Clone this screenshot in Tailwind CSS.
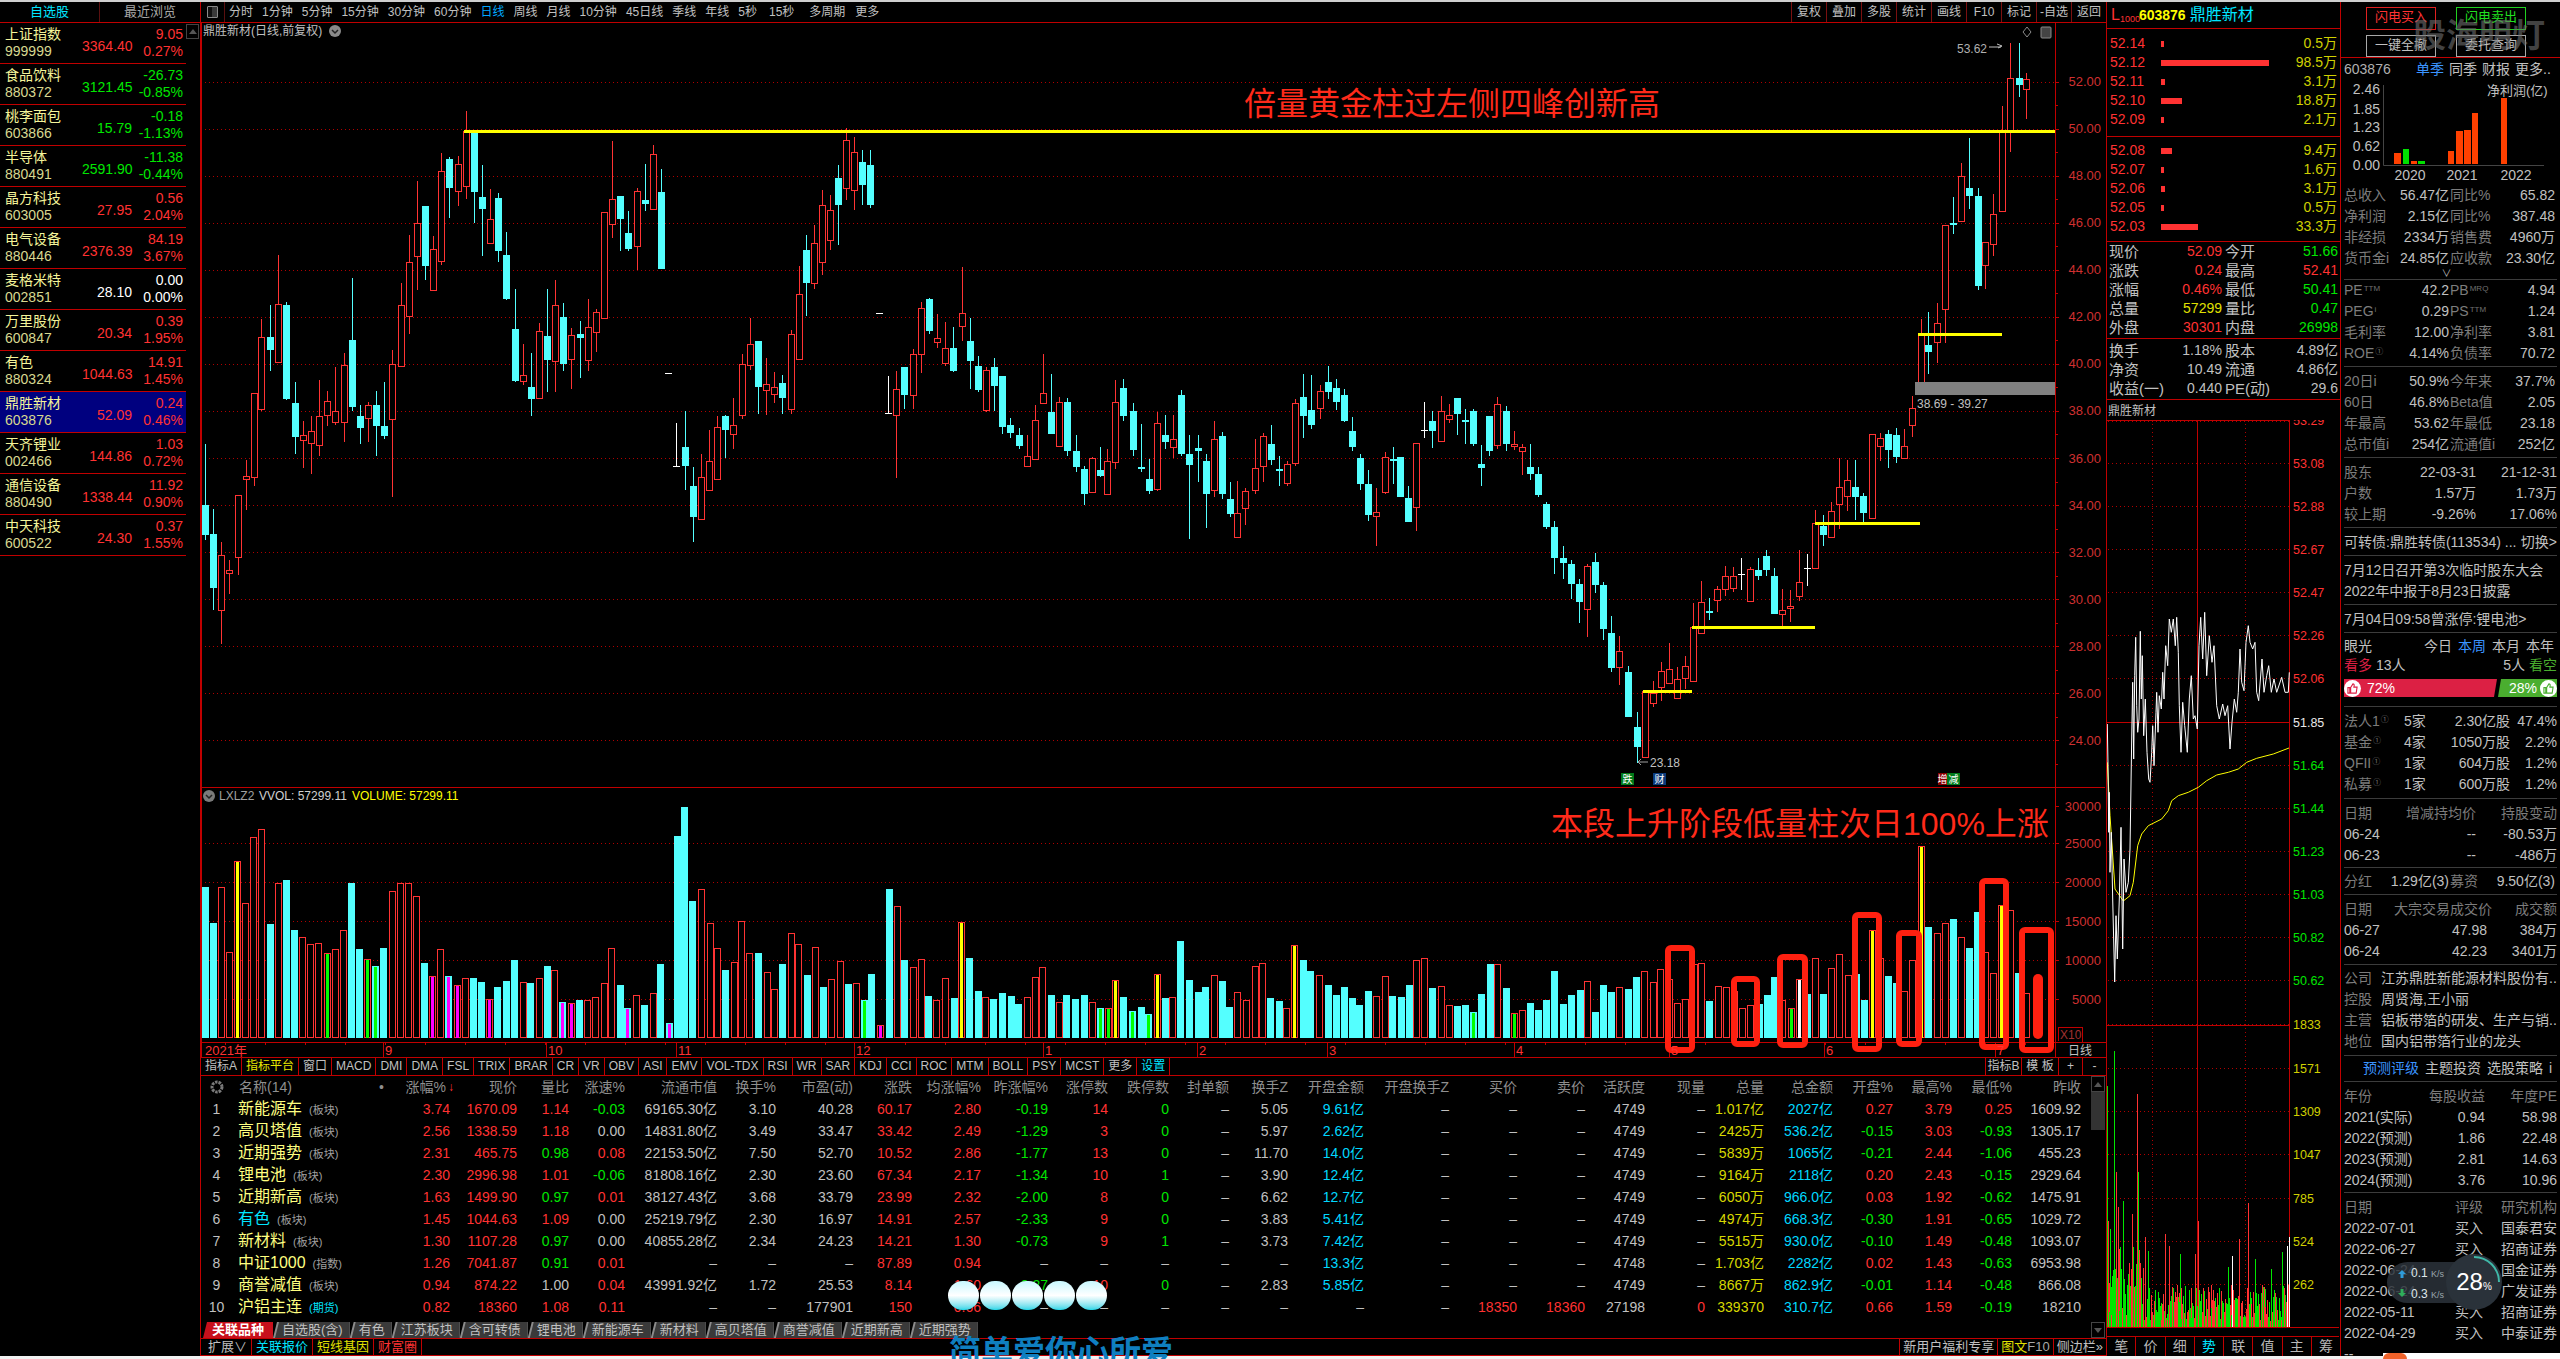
<!DOCTYPE html>
<html lang="zh-CN">
<head>
  <meta charset="UTF-8">
  <title>鼎胜新材 行情</title>
  <script src="https://cdn.jsdelivr.net/npm/@tailwindcss/browser@4"></script>
</head>
<body class="bg-black">
<div class="relative w-[2560px] h-[1359px] overflow-hidden bg-black text-[#c0c0c0] text-[14px] [font-family:'Liberation_Sans','Noto_Sans_CJK_SC',sans-serif]">
  <div class="h-[2px] bg-[#cfcfcf]"></div>

  <div class="flex h-[1354px]">
    <!-- watchlist -->
    <aside class="w-[201px] shrink-0 border-r border-[#c00000] flex flex-col">
      <div class="h-[21px] flex border-b border-[#c00000] text-[13px] leading-[20px] text-center">
        <div class="w-[100px] border-r border-[#5a1010] text-[#00e5ff]">自选股</div>
        <div class="w-[100px] text-[#a8a8a8]">最近浏览</div>
      </div>
      <div class="flex">
        <div id="watch" class="w-[186px]"></div>
        <div class="w-[14px] pt-[1px]">
          <div class="h-[15px] w-[13px] border border-[#444] flex items-center justify-center">
            <div class="w-0 h-0 border-x-[4px] border-x-transparent border-b-[5px] border-b-[#555]"></div>
          </div>
        </div>
      </div>
    </aside>

    <!-- chart column -->
    <main class="w-[1905px] shrink-0 flex flex-col">
      <div class="h-[21px] flex border-b border-[#c00000] text-[12px] leading-[20px]">
        <div class="w-[24px] border-r border-[#5a1010] flex items-center justify-center">
          <div class="w-[11px] h-[12px] border border-[#8a8a8a] rounded-[1px] bg-[#3a3a3a]"><div class="w-[4px] h-full bg-[#111]"></div></div>
        </div>
        <div class="flex gap-[9px] pl-[4px]">
          <span>分时</span><span>1分钟</span><span>5分钟</span><span>15分钟</span><span>30分钟</span><span>60分钟</span>
          <span class="text-[#00a8ff]">日线</span><span>周线</span><span>月线</span><span>10分钟</span><span>45日线</span><span>季线</span><span>年线</span><span>5秒</span><span class="ml-[3px]">15秒</span><span class="ml-[6px]">多周期</span><span class="ml-[1px]">更多</span>
        </div>
        <div class="ml-auto flex text-center">
          <span class="w-[35px] border-l border-[#7a1010]">复权</span>
          <span class="w-[35px] border-l border-[#7a1010]">叠加</span>
          <span class="w-[35px] border-l border-[#7a1010]">多股</span>
          <span class="w-[35px] border-l border-[#7a1010]">统计</span>
          <span class="w-[35px] border-l border-[#7a1010]">画线</span>
          <span class="w-[35px] border-l border-[#7a1010]">F10</span>
          <span class="w-[35px] border-l border-[#7a1010]">标记</span>
          <span class="w-[35px] border-l border-[#7a1010]">-自选</span>
          <span class="w-[35px] border-l border-[#7a1010]">返回</span>
        </div>
      </div>

      <svg id="kchart" class="block" width="1905" height="1035" viewBox="201 23 1905 1035"></svg>

      <div class="h-[18px] flex border-b border-[#c00000] text-[12px] leading-[16px]">
        <span class="px-[4px] border-r border-[#c00000]">指标A</span>
        <span class="px-[4px] border-r border-[#c00000] text-[#e8e800]">指标平台</span>
        <span class="px-[4px] border-r border-[#c00000]">窗口</span>
        <span class="px-[4px] border-r border-[#c00000]">MACD</span>
        <span class="px-[4px] border-r border-[#c00000]">DMI</span>
        <span class="px-[4px] border-r border-[#c00000]">DMA</span>
        <span class="px-[4px] border-r border-[#c00000]">FSL</span>
        <span class="px-[4px] border-r border-[#c00000]">TRIX</span>
        <span class="px-[4px] border-r border-[#c00000]">BRAR</span>
        <span class="px-[4px] border-r border-[#c00000]">CR</span>
        <span class="px-[4px] border-r border-[#c00000]">VR</span>
        <span class="px-[4px] border-r border-[#c00000]">OBV</span>
        <span class="px-[4px] border-r border-[#c00000]">ASI</span>
        <span class="px-[4px] border-r border-[#c00000]">EMV</span>
        <span class="px-[4px] border-r border-[#c00000]">VOL-TDX</span>
        <span class="px-[4px] border-r border-[#c00000]">RSI</span>
        <span class="px-[4px] border-r border-[#c00000]">WR</span>
        <span class="px-[4px] border-r border-[#c00000]">SAR</span>
        <span class="px-[4px] border-r border-[#c00000]">KDJ</span>
        <span class="px-[4px] border-r border-[#c00000]">CCI</span>
        <span class="px-[4px] border-r border-[#c00000]">ROC</span>
        <span class="px-[4px] border-r border-[#c00000]">MTM</span>
        <span class="px-[4px] border-r border-[#c00000]">BOLL</span>
        <span class="px-[4px] border-r border-[#c00000]">PSY</span>
        <span class="px-[4px] border-r border-[#c00000]">MCST</span>
        <span class="px-[4px] border-r border-[#c00000]">更多</span>
        <span class="px-[4px] border-r border-[#c00000] text-[#00e5ff]">设置</span>
        <div class="ml-auto flex text-center">
          <span class="w-[36px] border-l border-[#c00000]">指标B</span>
          <span class="w-[37px] border-l border-[#c00000]">模 板</span>
          <span class="w-[24px] border-l border-[#c00000]">+</span>
          <span class="w-[24px] border-l border-[#c00000]">-</span>
        </div>
      </div>

      <div class="flex">
        <div class="flex-1">
          <div id="table"></div>
          <div class="h-[20px] flex items-end pl-[2px] text-[13px] leading-[15px]">
            <div class="bg-[#c8101c] text-white font-bold px-[9px] pb-[1px] [clip-path:polygon(4px_0,100%_0,100%_100%,0_100%)]">关联品种</div>
            <span class="bg-[#8c8c8c] pl-[2px] [clip-path:polygon(4px_0,100%_0,100%_100%,0_100%)]"><span class="block bg-[#3a3a3a] text-[#c0c0c0] px-[7px] pb-[1px] [clip-path:polygon(4px_0,100%_0,100%_100%,0_100%)]">自选股(含)</span></span>
            <span class="bg-[#8c8c8c] pl-[2px] [clip-path:polygon(4px_0,100%_0,100%_100%,0_100%)]"><span class="block bg-[#3a3a3a] text-[#c0c0c0] px-[7px] pb-[1px] [clip-path:polygon(4px_0,100%_0,100%_100%,0_100%)]">有色</span></span>
            <span class="bg-[#8c8c8c] pl-[2px] [clip-path:polygon(4px_0,100%_0,100%_100%,0_100%)]"><span class="block bg-[#3a3a3a] text-[#c0c0c0] px-[7px] pb-[1px] [clip-path:polygon(4px_0,100%_0,100%_100%,0_100%)]">江苏板块</span></span>
            <span class="bg-[#8c8c8c] pl-[2px] [clip-path:polygon(4px_0,100%_0,100%_100%,0_100%)]"><span class="block bg-[#3a3a3a] text-[#c0c0c0] px-[7px] pb-[1px] [clip-path:polygon(4px_0,100%_0,100%_100%,0_100%)]">含可转债</span></span>
            <span class="bg-[#8c8c8c] pl-[2px] [clip-path:polygon(4px_0,100%_0,100%_100%,0_100%)]"><span class="block bg-[#3a3a3a] text-[#c0c0c0] px-[7px] pb-[1px] [clip-path:polygon(4px_0,100%_0,100%_100%,0_100%)]">锂电池</span></span>
            <span class="bg-[#8c8c8c] pl-[2px] [clip-path:polygon(4px_0,100%_0,100%_100%,0_100%)]"><span class="block bg-[#3a3a3a] text-[#c0c0c0] px-[7px] pb-[1px] [clip-path:polygon(4px_0,100%_0,100%_100%,0_100%)]">新能源车</span></span>
            <span class="bg-[#8c8c8c] pl-[2px] [clip-path:polygon(4px_0,100%_0,100%_100%,0_100%)]"><span class="block bg-[#3a3a3a] text-[#c0c0c0] px-[7px] pb-[1px] [clip-path:polygon(4px_0,100%_0,100%_100%,0_100%)]">新材料</span></span>
            <span class="bg-[#8c8c8c] pl-[2px] [clip-path:polygon(4px_0,100%_0,100%_100%,0_100%)]"><span class="block bg-[#3a3a3a] text-[#c0c0c0] px-[7px] pb-[1px] [clip-path:polygon(4px_0,100%_0,100%_100%,0_100%)]">高贝塔值</span></span>
            <span class="bg-[#8c8c8c] pl-[2px] [clip-path:polygon(4px_0,100%_0,100%_100%,0_100%)]"><span class="block bg-[#3a3a3a] text-[#c0c0c0] px-[7px] pb-[1px] [clip-path:polygon(4px_0,100%_0,100%_100%,0_100%)]">商誉减值</span></span>
            <span class="bg-[#8c8c8c] pl-[2px] [clip-path:polygon(4px_0,100%_0,100%_100%,0_100%)]"><span class="block bg-[#3a3a3a] text-[#c0c0c0] px-[7px] pb-[1px] [clip-path:polygon(4px_0,100%_0,100%_100%,0_100%)]">近期新高</span></span>
            <span class="bg-[#8c8c8c] pl-[2px] [clip-path:polygon(4px_0,100%_0,100%_100%,0_100%)]"><span class="block bg-[#3a3a3a] text-[#c0c0c0] px-[7px] pb-[1px] [clip-path:polygon(4px_0,100%_0,100%_100%,0_100%)]">近期强势</span></span>
          </div>
        </div>
        <div class="w-[14px] mr-[1px] h-[262px] flex flex-col">
          <div class="h-[16px] border border-[#444] flex items-center justify-center"><div class="w-0 h-0 border-x-[4px] border-x-transparent border-b-[5px] border-b-[#555]"></div></div>
          <div class="h-[38px] bg-[#333]"></div>
          <div class="flex-1"></div>
          <div class="h-[16px] border border-[#444] flex items-center justify-center"><div class="w-0 h-0 border-x-[4px] border-x-transparent border-t-[5px] border-t-[#555]"></div></div>
        </div>
      </div>

      <div class="h-[18px] flex border-y border-[#c00000] text-[13px] leading-[16px]">
        <span class="px-[4px] ml-[3px] border-r border-[#c00000]">扩展∨</span>
        <span class="px-[4px] border-r border-[#c00000] text-[#00e5ff]">关联报价</span>
        <span class="px-[4px] border-r border-[#c00000] text-[#e0e000]">短线基因</span>
        <span class="px-[4px] border-r border-[#c00000] text-[#ff3232]">财富圈</span>
        <div class="ml-auto flex">
          <span class="px-[3px] border-l border-[#c00000]">新用户福利专享</span>
          <span class="px-[3px] border-l border-[#c00000]"><span class="text-[#e0e000]">图文</span><span class="text-[#a8a8a8]">F10</span></span>
          <span class="px-[3px] border-l border-[#c00000]">侧边栏»</span>
        </div>
      </div>
    </main>

    <!-- order book + minute chart -->
    <section class="w-[235px] shrink-0 border-x border-[#c00000] flex flex-col">
      <div class="h-[27px] border-b border-[#c00000] flex items-center pl-[4px] whitespace-nowrap">
        <span class="text-[16px] text-[#ff3232]">L</span>
        <span class="text-[9px] text-[#ff3232] mt-[10px] mr-[3px] w-[16px]">1000</span>
        <span class="font-bold text-[#ffff00]">603876</span>
        <span class="text-[16px] text-[#00e5ff] ml-[4px]">鼎胜新材</span>
      </div>
      <div id="asks" class="pt-[5px]"></div>
      <div class="h-px bg-[#c00000] mt-[7px]"></div>
      <div id="bids" class="pt-[4px]"></div>
      <div class="h-px bg-[#c00000] mt-[5px]"></div>
      <div id="quote"></div>
      <div class="h-px bg-[#c00000] mt-px"></div>
      <div id="quote2" class="pt-[2px]"></div>
      <div class="h-px bg-[#c00000] mt-px"></div>
      <div class="h-[20px] text-[12px] leading-[22px] pl-[1px]">鼎胜新材</div>
      <svg id="minute" class="block" width="233" height="917" viewBox="2107 421 233 917"></svg>
      <div class="flex-1 flex text-center leading-[18px] text-[#b8b8b8]">
        <span class="flex-1 border-r border-[#c00000]">笔</span>
        <span class="flex-1 border-r border-[#c00000]">价</span>
        <span class="flex-1 border-r border-[#c00000]">细</span>
        <span class="flex-1 border-r border-[#c00000] text-[#00e5ff]">势</span>
        <span class="flex-1 border-r border-[#c00000]">联</span>
        <span class="flex-1 border-r border-[#c00000]">值</span>
        <span class="flex-1 border-r border-[#c00000]">主</span>
        <span class="flex-1">筹</span>
      </div>
    </section>

    <!-- fundamentals -->
    <aside class="w-[219px] shrink-0 flex flex-col overflow-hidden">
      <div class="h-[56px] shrink-0 border-b border-[#c00000] grid grid-cols-[70px_70px] gap-x-[20px] gap-y-[5px] pl-[25px] pt-[5px] text-[13px] leading-[18px] text-center">
        <div class="border border-[#e02020] text-[#ff3232]">闪电买入</div>
        <div class="border border-[#20d020] text-[#20e020]">闪电卖出</div>
        <div class="border border-[#a8a8a8]">一键全撤</div>
        <div class="border border-[#a8a8a8]">委托查询</div>
      </div>
      <div id="panel" class="px-[3px] shrink-0"></div>
    </aside>
  </div>

  <div class="h-[3px] bg-[#f2f2f2]"></div>

  <!-- things floating over the terminal -->
  <div class="absolute left-[2413px] top-[17px] text-[33px] leading-[38px] font-bold text-[#707070]/60 whitespace-nowrap">股海明灯</div>
  <div class="absolute left-[948px] top-[1281px] flex gap-[1.5px]">
    <div class="w-[30.6px] h-[29px] rounded-full bg-linear-to-b from-[#c8f8ff] via-white to-[#12d6e8]"></div>
    <div class="w-[30.6px] h-[29px] rounded-full bg-linear-to-b from-[#c8f8ff] via-white to-[#12d6e8]"></div>
    <div class="w-[30.6px] h-[29px] rounded-full bg-linear-to-b from-[#c8f8ff] via-white to-[#12d6e8]"></div>
    <div class="w-[30.6px] h-[29px] rounded-full bg-linear-to-b from-[#c8f8ff] via-white to-[#12d6e8]"></div>
    <div class="w-[30.6px] h-[29px] rounded-full bg-linear-to-b from-[#c8f8ff] via-white to-[#12d6e8]"></div>
  </div>
  <div class="absolute left-[949px] top-[1335px] text-[32px] leading-[34px] font-bold text-[#0f7fc0] whitespace-nowrap">简单爱你心所爱</div>

  <div class="absolute left-[2387px] top-[1262px] w-[90px] h-[41px] rounded-full bg-[#2b333b]/85">
    <div class="absolute left-[24px] top-[3px] text-[12px] leading-[16px] text-[#dfe6ea]">0.1 <span class="text-[9px] text-[#9aa5ad]">K/s</span></div>
    <div class="absolute left-[24px] top-[24px] text-[12px] leading-[16px] text-[#dfe6ea]">0.3 <span class="text-[9px] text-[#9aa5ad]">K/s</span></div>
    <svg class="absolute left-[9px] top-[5px]" width="12" height="32" viewBox="0 0 12 32">
      <path d="M6 3 2 7h2.5v4h3V7H10z" fill="#2f9bd8"/><path d="M6 30l4-4H7.500v-4h-3v4H2z" fill="#2fae5a"/>
    </svg>
  </div>
  <div class="absolute left-[2446px] top-[1254px] w-[56px] h-[56px] rounded-full bg-[#2a323a] flex items-center justify-center text-white">
    <svg class="absolute inset-0" width="56" height="56" viewBox="0 0 56 56"><path d="M28 3A25 25 0 0 1 53 28" fill="none" stroke="#3fb8a8" stroke-width="2"/></svg>
    <span class="text-[24px] leading-none">28</span><span class="text-[10px] mt-[8px]">%</span>
  </div>
  <div class="absolute left-[2383px] top-[1353px] w-[177px] h-[6px] bg-white">
    <div class="w-[24px] h-[6px] bg-[#f0622a] rounded-t-[6px]"></div>
  </div>
</div>

<script>
  const RED = '#ff3333', CYAN = '#54ffff', GRID = '#b00000', LINE = '#c00000';

  // watchlist
  const watch = [
    ['上证指数','999999','3364.40','9.05','0.27%','r'],['食品饮料','880372','3121.45','-26.73','-0.85%','g'],
    ['桃李面包','603866','15.79','-0.18','-1.13%','g'],['半导体','880491','2591.90','-11.38','-0.44%','g'],
    ['晶方科技','603005','27.95','0.56','2.04%','r'],['电气设备','880446','2376.39','84.19','3.67%','r'],
    ['麦格米特','002851','28.10','0.00','0.00%','w'],['万里股份','600847','20.34','0.39','1.95%','r'],
    ['有色','880324','1044.63','14.91','1.45%','r'],['鼎胜新材','603876','52.09','0.24','0.46%','r'],
    ['天齐锂业','002466','144.86','1.03','0.72%','r'],['通信设备','880490','1338.44','11.92','0.90%','r'],
    ['中天科技','600522','24.30','0.37','1.55%','r']
  ];
  const wColor = { r: 'text-[#ff3232]', g: 'text-[#00e600]', w: 'text-white' };
  document.getElementById('watch').innerHTML = watch.map((w, i) => `
    <div class="h-[41px] border-b border-[#c00000] grid grid-cols-[77px_50px_55px] pl-[5px] pt-[3px] ${i === 9 ? 'bg-[#00007f]' : ''} ${wColor[w[5]]}">
      <div class="leading-[17px] whitespace-nowrap"><div class="text-[#f4f49a]">${w[0]}</div><div class="text-[#d8d890]">${w[1]}</div></div>
      <div class="text-right leading-[34px] pt-[3px]">${w[2]}</div>
      <div class="text-right leading-[17px] pr-[4px]"><div>${w[3]}</div><div>${w[4]}</div></div>
    </div>`).join('');

  // related-instrument table
  const tblCols = 'grid grid-cols-[31px_153px_65px_67px_52px_56px_92px_59px_77px_59px_69px_67px_60px_61px_60px_59px_76px_85px_68px_68px_60px_60px_59px_69px_60px_59px_60px_69px] whitespace-nowrap';
  const heads = ['涨幅%','现价','量比','涨速%','流通市值','换手%','市盈(动)','涨跌','均涨幅%','昨涨幅%','涨停数','跌停数','封单额','换手Z','开盘金额','开盘换手Z','买价','卖价','活跃度','现量','总量','总金额','开盘%','最高%','最低%','昨收'];
  const rows = [
    ['新能源车','板块','3.74 1670.09 1.14 -0.03 69165.30亿 3.10 40.28 60.17 2.80 -0.19 14 0 – 5.05 9.61亿 – – – 4749 – 1.017亿 2027亿 0.27 3.79 0.25 1609.92'],
    ['高贝塔值','板块','2.56 1338.59 1.18 0.00 14831.80亿 3.49 33.47 33.42 2.49 -1.29 3 0 – 5.97 2.62亿 – – – 4749 – 2425万 536.2亿 -0.15 3.03 -0.93 1305.17'],
    ['近期强势','板块','2.31 465.75 0.98 0.08 22153.50亿 7.50 52.70 10.52 2.86 -1.77 13 0 – 11.70 14.0亿 – – – 4749 – 5839万 1065亿 -0.21 2.44 -1.06 455.23'],
    ['锂电池','板块','2.30 2996.98 1.01 -0.06 81808.16亿 2.30 23.60 67.34 2.17 -1.34 10 1 – 3.90 12.4亿 – – – 4749 – 9164万 2118亿 0.20 2.43 -0.15 2929.64'],
    ['近期新高','板块','1.63 1499.90 0.97 0.01 38127.43亿 3.68 33.79 23.99 2.32 -2.00 8 0 – 6.62 12.7亿 – – – 4749 – 6050万 966.0亿 0.03 1.92 -0.62 1475.91'],
    ['有色','板块','1.45 1044.63 1.09 0.00 25219.79亿 2.30 16.97 14.91 2.57 -2.33 9 0 – 3.83 5.41亿 – – – 4749 – 4974万 668.3亿 -0.30 1.91 -0.65 1029.72'],
    ['新材料','板块','1.30 1107.28 0.97 0.00 40855.28亿 2.34 24.23 14.21 1.30 -0.73 9 1 – 3.73 7.42亿 – – – 4749 – 5515万 930.0亿 -0.10 1.49 -0.48 1093.07'],
    ['中证1000','指数','1.26 7041.87 0.91 0.01 – – – 87.89 0.94 – – – – – 13.3亿 – – – 4748 – 1.703亿 2282亿 0.02 1.43 -0.63 6953.98'],
    ['商誉减值','板块','0.94 874.22 1.00 0.04 43991.92亿 1.72 25.53 8.14 1.60 -0.27 10 0 – 2.83 5.85亿 – – – 4749 – 8667万 862.9亿 -0.01 1.14 -0.48 866.08'],
    ['沪铝主连','期货','0.82 18360 1.08 0.11 – – 177901 150 0.66 – – – – – – – 18350 18360 27198 0 339370 310.7亿 0.66 1.59 -0.19 18210']
  ];
  function cellClass(col, v) {
    const n = parseFloat(v);
    if (v === '–') return 'text-[#c0c0c0]';
    if (col === 2) return n < 1 ? 'text-[#00e600]' : n > 1 ? 'text-[#ff3232]' : 'text-[#c0c0c0]';
    if (col === 3 || col === 22 || col === 23 || col === 24) return n < 0 ? 'text-[#00e600]' : n > 0 ? 'text-[#ff3232]' : 'text-[#c0c0c0]';
    if ([0, 1, 7, 8, 10, 16, 17, 19].includes(col)) return 'text-[#ff3232]';
    if (col === 9 || col === 11) return 'text-[#00e600]';
    if (col === 14 || col === 21) return 'text-[#00d8ff]';
    if (col === 20) return 'text-[#d8d800]';
    return 'text-[#c0c0c0]';
  }
  const arrow = '<span class="text-[#ff3232] absolute -right-[4px] top-0 text-[12px]">↓</span>';
  let tbl = `<div class="${tblCols} h-[22px] leading-[22px] text-[#8f8f8f]">
    <div class="flex items-center justify-center"><svg width="14" height="14" viewBox="0 0 14 14"><circle cx="7" cy="7" r="5" fill="none" stroke="#7a7a7a" stroke-width="3" stroke-dasharray="2.500 1"/></svg></div>
    <div class="pl-[7px] flex justify-between pr-[1px]"><span>名称(14)</span><span>•</span></div>
    ${heads.map((h, i) => `<div class="text-right relative ${i === 0 ? 'pr-[4px]' : ''}">${h}${i === 0 ? arrow : ''}</div>`).join('')}
  </div>`;
  rows.forEach((r, i) => {
    const vals = r[2].split(' ');
    const nameCls = r[0] === '有色' ? 'text-[#00e5ff]' : 'text-[#ffff80]';
    const tagCls = r[1] === '期货' ? 'text-[#00e5ff]' : 'text-[#a0a0a0]';
    tbl += `<div class="${tblCols} h-[22px] leading-[22px]">
      <div class="text-center">${i + 1}</div>
      <div class="pl-[6px]"><span class="text-[16px] ${nameCls}">${r[0]}</span><span class="text-[11px] ml-[7px] ${tagCls}">(${r[1]})</span></div>
      ${vals.map((v, c) => `<div class="text-right ${cellClass(c, v)}">${v}</div>`).join('')}
    </div>`;
  });
  document.getElementById('table').innerHTML = tbl;

  // order book
  const askData = [['52.14','0.5万',3],['52.12','98.5万',108],['52.11','3.1万',4],['52.10','18.8万',21],['52.09','2.1万',3]];
  const bidData = [['52.08','9.4万',11],['52.07','1.6万',3],['52.06','3.1万',4],['52.05','0.5万',3],['52.03','33.3万',37]];
  const bookRow = d => `<div class="h-[19px] leading-[19px] flex items-center pl-[3px] pr-[3px]">
      <span class="w-[51px] text-[#ff3232]">${d[0]}</span>
      <span class="h-[6px] bg-[#ff3232]" style="width:${d[2]}px"></span>
      <span class="ml-auto text-[#d0d000]">${d[1]}</span></div>`;
  document.getElementById('asks').innerHTML = askData.map(bookRow).join('');
  document.getElementById('bids').innerHTML = bidData.map(bookRow).join('');

  const qClass = { r: 'text-[#ff3232]', g: 'text-[#00e600]', y: 'text-[#e0e000]', n: 'text-[#c0c0c0]' };
  const quoteRow = q => `<div class="h-[19px] leading-[19px] flex pl-[2px] whitespace-nowrap">
      <div class="w-[113px] flex justify-between mr-[3px]"><span class="text-[15px]">${q[0]}</span><span class="${qClass[q[2]]}">${q[1]}</span></div>
      <div class="w-[113px] flex justify-between"><span class="text-[15px]">${q[3]}</span><span class="${qClass[q[5]]}">${q[4]}</span></div></div>`;
  document.getElementById('quote').innerHTML = [
    ['现价','52.09','r','今开','51.66','g'],['涨跌','0.24','r','最高','52.41','r'],['涨幅','0.46%','r','最低','50.41','g'],
    ['总量','57299','y','量比','0.47','g'],['外盘','30301','r','内盘','26998','g']].map(quoteRow).join('');
  document.getElementById('quote2').innerHTML = [
    ['换手','1.18%','n','股本','4.89亿','n'],['净资','10.49','n','流通','4.86亿','n'],['收益(一)','0.440','n','PE(动)','29.6','n']].map(quoteRow).join('');

  // fundamentals panel
  const sep = '<div class="h-px bg-[#3c3c3c] mt-[2px] mb-[4px]"></div>';
  const dim = 'text-[#7c7c7c]';
  const sup = t => `<sup class="text-[8px] text-[#707070] ml-[1px]">${t}</sup>`;
  const halves = (a, b, c, d) => `<div class="h-[21px] leading-[21px] flex whitespace-nowrap">
      <div class="w-[105px] flex justify-between mr-[1px]"><span class="${dim}">${a}</span><span>${b}</span></div>
      <div class="w-[105px] flex justify-between"><span class="${dim}">${c}</span><span>${d}</span></div></div>`;
  const g3 = (a, b, c, cols, lab) => `<div class="h-[21px] leading-[21px] grid ${cols} whitespace-nowrap"><span class="${lab ? dim : ''}">${a}</span><span class="text-right ${lab ? dim : ''}">${b}</span><span class="text-right ${lab ? dim : ''}">${c}</span></div>`;
  const desc = (a, b) => `<div class="h-[21px] leading-[21px] flex whitespace-nowrap"><span class="w-[37px] ${dim}">${a}</span><span>${b}</span></div>`;
  const inst = (a, b, c, d) => `<div class="h-[21px] leading-[21px] grid grid-cols-[60px_36px_70px_47px] whitespace-nowrap"><span class="${dim}">${a}${sup('①')}</span><span>${b}</span><span class="text-right">${c}</span><span class="text-right">${d}</span></div>`;
  const rate = (a, b, c) => `<div class="h-[21px] leading-[21px] grid grid-cols-[111px_46px_56px] whitespace-nowrap"><span>${a}</span><span>${b}</span><span class="text-right">${c}</span></div>`;
  const thumb = c => `<span class="w-[17px] h-[17px] rounded-full bg-white flex items-center justify-center shrink-0"><svg width="11" height="11" viewBox="0 0 12 12"><path d="M1 5h2v6H1zM4 5l2.500-4c1 0 1.500.8 1.300 1.800L7.500 4.500H11l-1 6.500H4z" fill="none" stroke="${c}" stroke-width="1.200"/></svg></span>`;
  const cols3a = 'grid-cols-[50px_82px_81px]', cols3b = 'grid-cols-[50px_93px_70px]', cols3c = 'grid-cols-[60px_81px_72px]';
  document.getElementById('panel').innerHTML = `
    <div class="h-[23px] leading-[22px] flex whitespace-nowrap"><span class="w-[72px] text-[#b0b0b0]">603876</span><span class="text-[#3b94ff] mr-[5px]">单季</span><span class="mr-[5px]">同季</span><span class="mr-[5px]">财报</span><span>更多..</span></div>
    <svg class="block -mx-[3px]" width="219" height="104" viewBox="2341 81 219 104">
      <g font-size="14" fill="#c0c0c0" text-anchor="end">
        <text x="2380" y="94">2.46</text><text x="2380" y="114">1.85</text><text x="2380" y="132">1.23</text><text x="2380" y="151">0.62</text><text x="2380" y="170">0.00</text>
      </g>
      <text x="2487" y="95" font-size="13" fill="#c0c0c0">净利润(亿)</text>
      <path d="M2383.500 85V165.500H2544" fill="none" stroke="#444"/>
      <g fill="#ff4000"><rect x="2394" y="153" width="7" height="11"/><rect x="2411" y="161" width="6" height="3"/><rect x="2448" y="151" width="6" height="13"/><rect x="2456" y="131" width="7" height="33"/><rect x="2464" y="130" width="7" height="34"/><rect x="2472" y="113" width="6" height="51"/><rect x="2501" y="98" width="6" height="66"/></g>
      <g fill="#00e000"><rect x="2403" y="149" width="6" height="15"/><rect x="2418" y="161" width="7" height="3"/></g>
      <g font-size="14" fill="#c0c0c0" text-anchor="middle"><text x="2410" y="180">2020</text><text x="2462" y="180">2021</text><text x="2516" y="180">2022</text></g>
    </svg>
    ${halves('总收入','56.47亿','同比%','65.82')}${halves('净利润','2.15亿','同比%','387.48')}${halves('非经损','2334万','销售费','4960万')}${halves('货币金i','24.85亿','应收款','23.30亿')}
    <div class="h-[10px] text-center text-[10px] leading-[10px] pr-[8px] text-[#b0b0b0]">∨</div>
    <div class="h-px bg-[#3c3c3c]"></div>
    ${halves('PE'+sup('TTM'),'42.2','PB'+sup('MRQ'),'4.94')}${halves('PEG'+sup('i'),'0.29','PS'+sup('TTM'),'1.24')}${halves('毛利率','12.00','净利率','3.81')}${halves('ROE'+sup('①'),'4.14%','负债率','70.72')}
    ${sep}
    ${halves('20日i','50.9%','今年来','37.7%')}${halves('60日','46.8%','Beta值','2.05')}${halves('年最高','53.62','年最低','23.18')}${halves('总市值i','254亿','流通值i','252亿')}
    ${sep}
    ${g3('<span class="text-[#7c7c7c]">股东</span>','22-03-31','21-12-31',cols3a)}${g3('<span class="text-[#7c7c7c]">户数</span>','1.57万','1.73万',cols3a)}${g3('<span class="text-[#7c7c7c]">较上期</span>','-9.26%','17.06%',cols3a)}
    ${sep}
    <div class="h-[21px] leading-[21px] flex justify-between whitespace-nowrap"><span>可转债:鼎胜转债(113534) ...</span><span>切换&gt;</span></div>
    ${sep}
    <div class="h-[21px] leading-[21px] whitespace-nowrap">7月12日召开第3次临时股东大会</div>
    <div class="h-[21px] leading-[21px] whitespace-nowrap">2022年中报于8月23日披露</div>
    ${sep}
    <div class="h-[21px] leading-[21px] whitespace-nowrap">7月04日09:58曾涨停:锂电池&gt;</div>
    <div class="h-px bg-[#3c3c3c] mt-[2px] mb-[3px]"></div>
    <div class="h-[21px] leading-[21px] flex whitespace-nowrap"><span class="w-[80px]">眼光</span><span class="mr-[6px]">今日</span><span class="mr-[6px] text-[#3b94ff]">本周</span><span class="mr-[6px]">本月</span><span>本年</span></div>
    <div class="h-[16px] leading-[16px] flex justify-between whitespace-nowrap"><span><span class="text-[#dc2044]">看多</span> 13人</span><span>5人 <span class="text-[#4aae2f]">看空</span></span></div>
    <div class="h-[18px] mt-[6px] mb-[9px] flex gap-[1px]">
      <div class="w-[153px] h-full bg-[#dc2044] flex items-center gap-[6px] text-white [clip-path:polygon(0_0,100%_0,calc(100%_-_3px)_100%,0_100%)]">${thumb('#dc2044')}<span>72%</span></div>
      <div class="flex-1 h-full bg-[#4aae2f] flex items-center justify-end gap-[3px] text-white [clip-path:polygon(3px_0,100%_0,100%_100%,0_100%)]"><span>28%</span>${thumb('#4aae2f')}</div>
    </div>
    <div class="h-px bg-[#3c3c3c] mb-[4px]"></div>
    ${inst('法人1','5家','2.30亿股','47.4%')}${inst('基金','4家','1050万股','2.2%')}${inst('QFII','1家','604万股','1.2%')}${inst('私募','1家','600万股','1.2%')}
    <div class="h-px bg-[#3c3c3c] mt-[3px] mb-[4px]"></div>
    ${g3('日期','增减持均价','持股变动',cols3a,true)}${g3('06-24','--','-80.53万',cols3a)}${g3('06-23','--','-486万',cols3a)}
    <div class="h-px bg-[#3c3c3c] mt-[1px] mb-[3px]"></div>
    ${halves('分红','1.29亿(3)','募资','9.50亿(3)')}
    ${sep}
    ${g3('日期','大宗交易成交价','成交额',cols3b,true)}${g3('06-27','47.98','384万',cols3b)}${g3('06-24','42.23','3401万',cols3b)}
    <div class="h-px bg-[#3c3c3c] mt-[2px] mb-[3px]"></div>
    ${desc('公司','江苏鼎胜新能源材料股份有..')}${desc('控股','周贤海,王小丽')}${desc('主营','铝板带箔的研发、生产与销..')}${desc('地位','国内铝带箔行业的龙头')}
    <div class="h-px bg-[#3c3c3c] mt-[3px] mb-[2px]"></div>
    <div class="h-[21px] leading-[21px] flex whitespace-nowrap pl-[19px]"><span class="text-[#3b94ff] mr-[6px]">预测评级</span><span class="mr-[6px]">主题投资</span><span class="mr-[6px]">选股策略</span><span>i</span></div>
    ${sep}
    ${g3('年份','每股收益','年度PE',cols3c,true)}${g3('2021(实际)','0.94','58.98',cols3c)}${g3('2022(预测)','1.86','22.48',cols3c)}${g3('2023(预测)','2.81','14.63',cols3c)}${g3('2024(预测)','3.76','10.96',cols3c)}
    <div class="h-px bg-[#3c3c3c] mt-[1px] mb-[4px]"></div>
    <div class="h-[21px] leading-[21px] grid grid-cols-[111px_46px_56px] whitespace-nowrap ${dim}"><span>日期</span><span>评级</span><span class="text-right">研究机构</span></div>
    ${rate('2022-07-01','买入','国泰君安')}${rate('2022-06-27','买入','招商证券')}${rate('2022-06-24','买入','国金证券')}${rate('2022-06-24','买入','广发证券')}${rate('2022-05-11','买入','招商证券')}${rate('2022-04-29','买入','中泰证券')}
    <div class="h-[21px] leading-[21px]">--</div>`;

  // ---- daily candles: [x, bodyTop, bodyBottom, wickTop, wickBottom] in crop coordinates ----
  const candles = [];
  function addCandles(ox, oy, sx, sy, list) {
    list.forEach(c => candles.push({ t: c[0], x: ox + c[1] / sx, a: oy + c[2] / sy, b: oy + c[3] / sy, h: oy + c[4] / sy, l: oy + c[5] / sy }));
  }
  addCandles(200, 120, 2.613, 3, [
    ['c',14,1155,1245,972,1260],['c',35,1242,1404,1167,1470],['r',56,1305,1470,1266,1572],['r',77,1350,1358,1320,1422],['r',98,1126,1312,1126,1366],
    ['r',119,1068,1076,1020,1170],['r',140,820,1070,820,1097],['r',160,652,866,597,873],['c',184,651,690,555,753],['r',205,553,725,405,725],
    ['c',226,555,837,546,840],['c',247,849,951,786,1002],['r',268,946,959,903,1044],['r',289,934,968,888,1062],['r',310,889,974,780,1008],
    ['r',333,844,884,813,918],['r',354,874,905,741,915],['r',375,736,905,699,966],['c',396,660,861,474,873],['c',417,888,924,855,972],
    ['r',438,856,893,846,966],['c',459,855,918,813,1008],['c',480,918,948,786,957],['r',503,733,896,690,1131],['r',524,556,737,489,737],
    ['r',545,427,587,345,642],['r',566,310,407,183,510],['c',587,258,438,258,480],['r',608,388,509,348,509],['r',629,154,422,99,435],
    ['c',650,118,204,111,294],['r',673,133,212,108,258],['r',694,34,197,-27,237],['c',715,36,216,36,309],['c',736,231,267,135,408],
    ['r',757,298,368,207,368],['c',778,234,393,219,426],['c',799,405,537,336,540],['c',822,627,783,507,786],['r',843,766,782,672,795],
    ['c',864,801,837,699,888],['r',885,634,833,609,833],['c',906,648,720,507,816],['r',927,556,722,480,816],['c',948,591,732,549,753],
    ['r',969,646,716,624,807],['c',992,642,654,603,774],['r',1013,622,719,537,753],['r',1034,577,635,567,696],['r',1055,277,593,277,593],
    ['r',1076,238,311,63,354],['c',1097,228,297,228,393],['c',1118,339,387,273,393],['r',1141,214,377,205,450],['c',1162,240,252,132,273],
    ['r',1183,103,266,75,266],['c',1204,216,447,147,447],['w',1223,760,761,760,761],['w',1245,1039,1040,909,1040],['c',1266,981,1038,873,1110],
    ['c',1287,1098,1191,1041,1266],['r',1310,1072,1196,1002,1196],['r',1331,1024,1109,930,1109],['r',1352,922,1076,888,1076],['c',1373,888,930,885,1014],
    ['r',1394,916,941,834,987],['r',1415,733,884,702,897],['r',1436,673,734,594,750],['c',1457,663,801,663,882],['r',1480,793,809,714,885],
    ['r',1501,802,821,756,849],['c',1522,789,834,765,882],['r',1543,643,866,630,882],['r',1564,523,716,438,716]
  ]);
  // the stretch around x=806..870 above y=280
  addCandles(0, 0, 1, 1, [
    ['c',806,250,283,235,316],['r',814,243,283,225,289],['r',822,205,262,190,275],['r',830,210,240,195,250],['c',838,178,205,165,245],
    ['r',846,140,188,128,200],['r',854,152,190,137,210],['c',862,162,185,150,205],['c',870,165,205,150,208]
  ]);
  addCandles(800, 280, 2.613, 3, [
    ['w',206,99,100,99,100],['w',231,399,400,288,400],['r',252,328,404,273,594],['c',273,261,345,261,387],['r',294,222,344,207,387],['r',315,85,221,66,279],
    ['c',336,57,153,54,162],['r',357,175,185,102,204],['r',380,205,248,126,258],['c',401,204,273,141,276],['r',422,100,137,-40,183],
    ['c',443,183,243,114,327],['c',464,258,330,228,336],['r',485,270,391,261,396],['c',506,261,318,234,393],['c',527,288,441,288,462],
    ['c',550,435,459,414,474],['c',571,465,498,444,507],['r',592,529,557,465,557],['r',613,421,536,375,536],['r',634,340,368,222,368],
    ['c',655,396,462,282,462],['r',676,367,497,351,497],['c',697,366,513,354,528],['c',720,513,561,465,576],['c',741,567,642,558,675],
    ['r',762,535,635,531,635],['c',783,570,588,501,591],['r',803,544,641,507,641],['r',824,367,545,300,567],['c',845,324,408,297,423],
    ['c',869,393,510,369,528],['c',890,561,567,432,576],['c',911,597,633,537,642],['r',932,430,627,396,633],['c',953,465,486,405,507],
    ['r',974,478,502,405,534],['c',995,345,522,330,528],['c',1016,522,555,465,777],['c',1039,504,513,465,606],['c',1060,543,642,522,744],
    ['r',1081,478,629,423,651],['c',1102,468,642,456,657],['c',1123,657,702,606,711],['r',1143,700,770,603,770],['r',1164,634,684,624,735],
    ['r',1188,565,629,477,642],['r',1209,469,557,459,606],['c',1230,492,540,435,555],['c',1251,567,573,528,618],['r',1272,553,608,543,618],
    ['r',1293,370,548,357,558],['c',1314,351,408,282,474],['c',1335,390,435,285,447],['r',1358,334,383,315,417],['c',1379,306,336,258,357],
    ['c',1400,324,366,297,390],['c',1421,345,423,327,426],['c',1442,453,501,411,513],['c',1463,534,612,522,630],['c',1484,612,705,570,723],
    ['r',1505,697,707,624,798],['r',1528,532,635,516,642],['c',1549,537,543,501,612],['c',1568,531,651,531,651]
  ]);
  addCandles(1400, 340, 2.376, 3, [
    ['c',20,474,546,438,546],['r',39,310,500,310,573],['w',58,270,272,186,294],['c',77,243,273,213,324],['r',98,214,302,168,302],
    ['r',117,226,236,192,249],['c',136,174,222,174,285],['c',155,240,243,207,312],['c',174,213,312,207,318],['c',193,372,384,315,438],
    ['c',212,228,333,228,348],['r',231,193,314,171,327],['c',253,213,312,198,333],['r',270,313,315,273,330],['r',291,322,332,312,405],
    ['c',310,381,402,312,420],['c',329,402,465,381,471],['c',348,492,561,486,567],['c',367,561,654,543,702],['c',388,654,669,618,717],
    ['c',407,672,732,660,777],['c',426,732,786,717,849],['r',445,678,806,672,891],['c',464,666,735,639,759],['c',483,735,867,726,900],
    ['c',502,879,984,828,996],['r',521,934,980,888,1035],['c',542,996,1131,978,1131],['c',562,1161,1221,1116,1270],['r',581,1054,1250,1054,1250],
    ['r',600,1060,1088,1023,1100],['r',619,994,1040,966,1083],['r',638,988,1028,909,1028],['r',657,1018,1073,981,1073],['r',676,979,1013,948,1047],
    ['r',697,862,1022,790,1026],['r',716,787,878,723,878],['c',735,813,815,774,840],['r',754,748,779,738,816],['r',773,709,746,678,768],
    ['r',792,709,743,681,756],['w',811,703,705,654,750],['r',832,688,782,681,782],['c',851,690,708,654,720],['c',870,648,690,630,708],
    ['c',889,708,822,684,822],['r',908,811,821,747,858],['r',927,798,800,750,846],['r',947,727,767,630,782],['w',966,684,686,642,738],
    ['r',987,550,683,510,683],['c',1006,558,585,525,618],['r',1025,514,590,486,590],['r',1044,441,491,354,567],['r',1063,421,467,360,513],
    ['c',1082,441,471,360,540],['c',1101,468,519,459,546],['r',1122,283,533,283,533],['r',1141,295,317,279,363],['c',1160,282,330,270,384],
    ['c',1179,285,351,264,369],['r',1198,319,353,267,353],['r',1217,205,254,168,291]
  ]);
  addCandles(1700, 0, 1.823, 3, [
    ['r',402,1003,1145,957,1145],['c',416,1035,1056,936,1122],['r',432,970,1025,909,1088],['r',447,676,926,676,1028],['c',462,669,673,591,701],
    ['r',476,528,662,490,662],['c',491,564,588,414,627],['c',506,588,858,564,870],['r',520,727,796,727,868],['r',535,643,733,582,768],
    ['r',551,390,634,318,634],['r',566,234,395,130,455],['c',581,234,254,130,290],['r',595,238,268,219,357]
  ]);

  // ---- volume bars: [x, top, kind] in crop coordinates ----
  const vols = [];
  function addVols(ox, oy, sx, sy, str) {
    str.trim().split(/\s+/).forEach(s => { const p = s.split(','); vols.push({ t: p[0], x: ox + (+p[1]) / sx, y: oy + (+p[2]) / sy }); });
  }
  addVols(0, 400, 3, 2.376, `c,616,1157 c,640,1243 r,664,1156 r,688,1312 y,712,1096 r,736,1194 r,760,1039 r,784,1020 c,811,1245 r,835,1148 c,859,1140 c,883,1259 r,907,1277 r,931,1293 r,955,1289 g,982,1315 r,1006,1305 r,1030,1260 c,1054,1147 c,1078,1304 g,1102,1329 G,1126,1345 c,1150,1302 r,1177,1167 r,1201,1148 r,1225,1148 r,1249,1179 c,1273,1338 m,1297,1368 r,1321,1305 M,1345,1368 m,1372,1390 r,1396,1374 c,1420,1373 c,1444,1383 m,1468,1423 c,1492,1395`);
  addVols(480, 800, 1.668, 3, `c,43,543 c,57,480 r,71,547 c,84,549 r,98,535 c,111,498 r,124,511 M,137,606 m,151,610 c,165,601 r,179,601 r,192,592 r,206,550 r,219,445 c,233,555 M,246,624 r,261,586 c,274,615 r,288,580 c,301,492 M,315,669 c,328,108 c,341,21 c,354,303 r,369,268 r,383,370 r,396,445 c,409,510 r,423,487 r,436,364 r,449,460 c,463,459 r,478,517 r,491,568 c,504,492 r,518,400 r,531,433 c,545,525 r,558,442 c,572,561 r,586,538 r,600,484 c,613,552 r,627,550 G,640,600 c,653,522 m,667,675 c,682,267 r,695,319 c,708,480 r,722,502 r,735,478 c,748,588 r,761,601 r,776,535 c,790,594 y,803,366 c,816,474 c,830,573 r,843,592 c,856,597 c,870,579 c,885,588 c,898,612 r,912,592 r,925,532 r,938,502 c,952,585 r,965,607 c,978,585 c,993,597 c,1007,585 r,1020,607 G,1034,624 g,1047,624 y,1060,541 c,1073,591 G,1088,633 c,1102,621 G,1115,642 y,1129,523 c,1142,594 r,1155,592 c,1168,423 c,1182,540 c,1197,576 c,1210,561 r,1224,526 c,1237,543 c,1250,621 r,1263,577 r,1277,601 r,1292,499 r,1305,490 c,1318,594 c,1332,603 r,1345,625 y,1358,436 c,1372,480 c,1385,513 r,1400,526 c,1414,555 c,1427,585 c,1441,561 c,1454,594 c,1467,615 c,1481,573 r,1494,589 r,1509,529 c,1522,588 c,1536,591 c,1549,555 r,1562,481`);
  addVols(1400, 780, 2.178, 3, `r,53,533 c,70,624 r,90,619 r,107,676 c,125,678 c,142,675 G,160,696 c,177,642 c,195,552 r,212,553 c,231,624 g,249,700 r,266,691 c,284,669 c,301,690 c,319,660 c,336,573 c,355,672 c,373,645 c,391,630 r,408,604 c,425,696 c,443,615 c,460,636 r,477,622 c,497,627 c,515,591 r,532,574 r,550,607 r,567,568 r,585,598 r,603,670 r,620,658 r,640,553 r,656,550 c,674,663 r,692,619 r,709,622 r,727,634 r,744,685 r,763,676 c,781,672 c,799,645 c,815,591 r,833,661 g,851,685 W,868,598 c,886,642 r,904,535 c,922,642 r,939,565 r,957,523 r,975,586 c,993,582 c,1010,660 y,1028,451 r,1045,535 c,1063,588 c,1081,609 r,1098,634 r,1116,541 y,1134,198 c,1151,441 r,1170,460 r,1187,430 c,1205,417 r,1222,472 c,1240,504 c,1256,396 r,1275,517 r,1292,580 y,1310,376 r,1328,391 c,1345,579 r,1364,640`);

  // main chart svg
  let k = '';
  const dotted = (x1, x2, y) => `<path d="M${x1} ${Math.round(y) + .5}H${x2}" stroke="${GRID}" stroke-dasharray="1 3"/>`;
  const solid = (d, c) => `<path d="${d}" stroke="${c || LINE}" fill="none"/>`;
  let gridG = '';
  const prices = ['52.00','50.00','48.00','46.00','44.00','42.00','40.00','38.00','36.00','34.00','32.00','30.00','28.00','26.00','24.00'];
  let axis = '';
  prices.forEach((p, i) => {
    const y = 81.5 + 47.07 * i;
    gridG += dotted(201, 2055, y);
    axis += `<text x="2101" y="${y + 4.5}" text-anchor="end" font-size="13" fill="#d03030">${p}</text>`;
    gridG += solid(`M2055 ${Math.round(y) + .5}h4`) + solid(`M2055 ${Math.round(y + 23.5) + .5}h3`);
  });
  [[843,'25000'],[882,'20000'],[921,'15000'],[960,'10000'],[999,'5000']].forEach(([y, t]) => {
    gridG += dotted(201, 2055, y);
    axis += `<text x="2101" y="${y + 4.5}" text-anchor="end" font-size="13" fill="#d03030">${t}</text>`;
  });
  axis += `<text x="2101" y="810.500" text-anchor="end" font-size="13" fill="#d03030">30000</text>`;
  gridG += solid('M2055 806.500h4') + solid('M2055 843.500h4') + solid('M2055 882.500h4') + solid('M2055 921.500h4') + solid('M2055 960.500h4') + solid('M2055 999.500h4');

  let candleG = '';
  candles.forEach(c => {
    const cx = Math.round(c.x), h = Math.round(c.h), l = Math.round(c.l), a = Math.round(c.a), b = Math.round(c.b);
    if (c.t === 'c') {
      candleG += `<path d="M${cx + .5} ${h}V${l}" stroke="${CYAN}"/><rect x="${cx - 3}" y="${a}" width="7" height="${Math.max(b - a, 2)}" fill="${CYAN}"/>`;
    } else if (c.t === 'r') {
      candleG += `<path d="M${cx + .5} ${h}V${a}M${cx + .5} ${b}V${l}" stroke="${RED}"/><rect x="${cx - 2.5}" y="${a + .5}" width="6" height="${Math.max(b - a, 2)}" fill="#000" stroke="${RED}"/>`;
    } else {
      candleG += `<path d="M${cx + .5} ${h}V${l}" stroke="#fff"/><rect x="${cx - 3}" y="${a}" width="7" height="1" fill="#fff"/>`;
    }
  });

  let volG = '';
  const inner = { y: '#ffff00', g: '#00ff00', G: '#00ff00', m: '#ff00ff', M: '#ff00ff', W: '#ffffff' };
  vols.forEach(v => {
    const x = Math.round(v.x), y = Math.round(v.y), bot = 1038;
    if (v.t === 'c' || v.t === 'G' || v.t === 'M') volG += `<rect x="${x - 3}" y="${y}" width="7" height="${bot - y}" fill="${CYAN}"/>`;
    else volG += `<rect x="${x - 2.5}" y="${y + .5}" width="6" height="${bot - y - 1}" fill="#000" stroke="${RED}"/>`;
    if (inner[v.t]) volG += `<rect x="${x - 1}" y="${y + 1}" width="3" height="${bot - y - 1}" fill="${inner[v.t]}"/>`;
  });

  const marks = '<g fill="#ffff00">' + [[464,130,1591],[1643,690,49],[1692,626,123],[1815,522,105],[1918,333,84]].map(m => `<rect x="${m[0]}" y="${m[1]}" width="${m[2]}" height="3"/>`).join('') + '</g>';
  const frames = [[1665,945,1695,1053],[1731,976,1760,1047],[1777,954,1808,1048],[1852,912,1882,1052],[1896,930,1922,1047],[1979,878,2009,1050],[2019,927,2054,1053]]
    .map(f => `<rect x="${f[0] + 3}" y="${f[1] + 3}" width="${f[2] - f[0] - 6}" height="${f[3] - f[1] - 6}" rx="3" fill="none" stroke="#ff2010" stroke-width="6"/>`).join('');

  let dateG = solid('M201 1042.500H2106') + solid('M201 1057.500H2106');
  for (let x = 225; x < 2055; x += 40) dateG += solid(`M${x + .5} 1042v3`);
  const dateLabels = [[383,'9'],[546,'10'],[676,'11'],[854,'12'],[1043,'1'],[1197,'2'],[1327,'3'],[1514,'4'],[1669,'5'],[1824,'6'],[1995,'7']];
  dateLabels.forEach(([x]) => { dateG += solid(`M${x + .5} 1043V1057`); });
  const dateText = `<text x="205" y="1055" font-size="13" fill="#ff3232">2021年</text>` + dateLabels.map(([x, t]) => `<text x="${x + 2}" y="1055" font-size="13" fill="#ff3232">${t}</text>`).join('');

  k += `<g shape-rendering="crispEdges">${gridG}${volG}${candleG}
    ${solid('M201.500 23V1057') }${solid('M2055.500 23V1057')}${solid('M201 787.500H2105')}${dateG}
    ${solid('M2058 1027.500h24v14M2058 1027v14')}
    <rect x="1915" y="382" width="140" height="13" fill="#808080"/>${marks}</g>
    ${frames}<rect x="2033" y="974" width="10" height="65" rx="5" fill="#ff2010"/>
    ${axis}${dateText}
    <text x="203" y="35" font-size="12" fill="#c0c0c0">鼎胜新材(日线,前复权)</text>
    <circle cx="335" cy="31" r="6" fill="#8a8a8a"/><path d="M332 30l3 3 3-3" fill="none" stroke="#222" stroke-width="1.500"/>
    <path d="M2027 27l4 5-4 5-4-5z" fill="none" stroke="#8a8a8a"/><rect x="2041" y="27" width="10" height="11" rx="1" fill="#444" stroke="#8a8a8a"/>
    <text x="1244" y="115" font-size="32" fill="#ff2a1a">倍量黄金柱过左侧四峰创新高</text>
    <text x="1551" y="835" font-size="32" fill="#ff2a1a">本段上升阶段低量柱次日100%上涨</text>
    <text x="1957" y="53" font-size="12" fill="#b0b0b0">53.62</text><path d="M1989 47h12m-4-3l5 2-4 2" fill="none" stroke="#c0c0c0"/>
    <text x="1917" y="408" font-size="12" fill="#c0c0c0">38.69 - 39.27</text>
    <path d="M1648 762h-10m3-3l-3 3 3 3" fill="none" stroke="#a0a0a0"/><text x="1650" y="767" font-size="12" fill="#c0c0c0">23.18</text>
    <g font-size="10" text-anchor="middle" fill="#fff">
      <rect x="1621" y="773" width="13" height="12" fill="#007a1a"/><text x="1627.500" y="783">跌</text>
      <rect x="1653" y="773" width="13" height="12" fill="#0a3a7a"/><text x="1659.500" y="783">财</text>
      <rect x="1938" y="773" width="9" height="12" fill="#8a0000"/><text x="1942.500" y="783">增</text>
      <rect x="1947" y="773" width="13" height="12" fill="#007a1a"/><text x="1953.500" y="783">减</text>
    </g>
    <circle cx="209" cy="796" r="6" fill="#7a7a7a"/><path d="M206 795l3 3 3-3" fill="none" stroke="#222" stroke-width="1.500"/>
    <text x="219" y="800" font-size="12"><tspan fill="#a0a0a0">LXLZ2</tspan><tspan x="259" fill="#d0d0d0">VVOL: 57299.11</tspan><tspan x="352" fill="#ffff00">VOLUME: 57299.11</tspan></text>
    <text x="2060" y="1039" font-size="12" fill="#a03030">X10</text>
    <text x="2068" y="1055" font-size="12" fill="#c0c0c0">日线</text>`;
  document.getElementById('kchart').innerHTML = k;

  // minute chart
  const Z = (x, y) => [2100 + x / 3, 400 + y / 3];
  const pricePts = '22,975 24,1100 26,1300 28,1180 30,1420 34,1300 38,1500 44,1749 48,1550 52,1680 58,1500 63,1285 68,1650 72,1380 78,1480 85,1450 90,1350 95,1020 98,850 101,1080 104,830 107,715 110,920 113,1000 117,960 121,697 124,900 127,770 131,1010 136,900 141,1060 146,1140 150,1150 155,1060 158,980 162,1100 168,940 170,880 174,1000 178,890 184,930 188,820 192,900 197,740 203,800 208,660 214,700 220,660 226,740 230,655 235,760 238,920 243,1060 248,910 254,980 262,1060 268,900 274,830 280,960 285,950 292,990 297,740 302,655 308,780 314,640 320,830 328,710 336,790 342,740 350,920 358,960 368,915 375,950 383,920 390,1050 396,970 403,900 410,940 415,880 420,750 425,850 432,875 438,730 445,680 450,730 458,750 465,730 470,880 476,905 486,780 492,880 500,830 506,800 514,880 522,840 530,880 545,835 555,880 565,880 568,820';
  const avgPts = '22,1090 30,1250 45,1470 70,1506 90,1490 100,1450 113,1340 125,1305 145,1280 185,1260 205,1235 215,1205 235,1190 265,1180 295,1165 320,1145 350,1128 385,1120 415,1110 440,1090 470,1078 520,1065 567,1047';
  const toPath = s => s.split(' ').map(p => { const [x, y] = p.split(',').map(Number); return Z(x, y).map(v => v.toFixed(1)).join(','); }).join(' ');
  const mp = [['53.29',421.5,'#ff3232'],['53.08',464,'#ff3232'],['52.88',507,'#ff3232'],['52.67',550,'#ff3232'],['52.47',593,'#ff3232'],['52.26',636,'#ff3232'],['52.06',679,'#ff3232'],['51.85',723,'#e8e8e8'],['51.64',766,'#00e600'],['51.44',809,'#00e600'],['51.23',852,'#00e600'],['51.03',895,'#00e600'],['50.82',938,'#00e600'],['50.62',981,'#00e600'],['1833',1025,'#d0d000'],['1571',1069,'#d0d000'],['1309',1112,'#d0d000'],['1047',1155,'#d0d000'],['785',1199,'#d0d000'],['524',1242,'#d0d000'],['262',1285,'#d0d000']];
  let m = '<g shape-rendering="crispEdges">';
  mp.forEach(([t, y]) => { m += `<path d="M2108 ${Math.round(y) + .5}H2289" stroke="${GRID}" stroke-dasharray="1 3"/>`; });
  m += `<path d="M2152.500 421V1328M2245.500 421V1328" stroke="${GRID}" stroke-dasharray="1 3"/>`;
  m += solid('M2107 421.500H2289') + solid('M2197.500 421V1328') + solid('M2289.500 421V1328') + solid('M2107 723.500H2289') + solid('M2107 1026.500H2289') + solid('M2107 1328.500H2339') + solid('M2107 1337.500H2339');

  // volume bars
  let seed = 7;
  const rnd = () => (seed = (seed * 9301 + 49297) % 233280) / 233280;
  const tall = { 22:[620,'g'],25:[1025,'r'],30:[1050,'g'],43:[517,'g'],48:[880,'r'],54:[985,'r'],70:[965,'g'],97:[1005,'r'],112:[645,'r'],115:[880,'g'],137:[1075,'r'],145:[1115,'g'],197:[1065,'r'],208:[1100,'r'],240:[1125,'g'],285:[1125,'r'],295:[1025,'r'],385:[1165,'g'],397:[1130,'w'],418:[1080,'r'],445:[972,'r'],466:[1140,'g'],514:[1170,'g'],547:[1120,'g'],562:[1100,'w'],567:[1075,'w'] };
  const barColor = { r: '#ff3232', g: '#00e600', w: '#ffffff' };
  for (let x = 22; x < 568; x += 2) {
    const zx = x;
    let t = tall[zx] || tall[zx + 1];
    const fade = zx < 130 ? 230 : 110;
    const top = t ? t[0] : 1345 - (20 + rnd() * fade);
    const c = t ? t[1] : (rnd() > .52 ? 'r' : 'g');
    const px = 2100 + zx / 3, py = 880 + top / 3;
    m += `<rect x="${px.toFixed(1)}" y="${py.toFixed(1)}" width="1" height="${(1328 - py).toFixed(1)}" fill="${barColor[c]}"/>`;
  }
  m += '</g>';
  m += `<polyline points="${toPath(avgPts)}" fill="none" stroke="#ffff00"/>`;
  m += `<polyline points="${toPath(pricePts)}" fill="none" stroke="#ffffff" stroke-width="1"/>`;
  mp.forEach(([t, y, c]) => { m += `<text x="2293" y="${y + 4.5}" font-size="12.500" fill="${c}">${t}</text>`; });
  document.getElementById('minute').innerHTML = m;
</script>
</body>
</html>
